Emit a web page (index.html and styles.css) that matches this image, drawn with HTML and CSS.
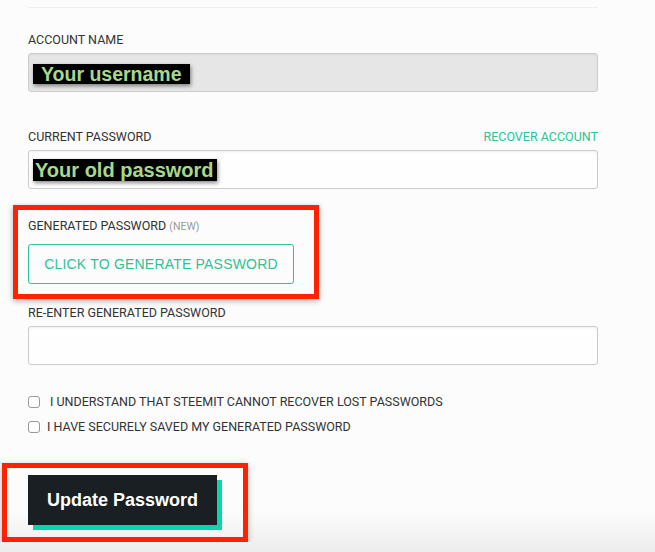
FILE: index.html
```html
<!DOCTYPE html>
<html lang="en">
  <head>
    <meta charset="UTF-8" />
    <meta name="viewport" content="width=device-width, initial-scale=1.0" />
    <title>Change Password</title>
    <link rel="stylesheet" href="styles.css">
  </head>

  <body>
    <div class="container">
      <div class="divider"></div>

      <form id="password-form">
        <label class="field-label first">ACCOUNT NAME</label>
        <div class="input disabled">
          <span class="marker small">Your username</span>
        </div>

        <div class="label-row">
          <label class="field-label">CURRENT PASSWORD</label>
          <a href="#" class="recover">RECOVER ACCOUNT</a>
        </div>
        <div class="input">
          <span class="marker">Your old password</span>
        </div>

        <div class="callout">
          <label class="field-label">GENERATED PASSWORD <span class="new">(NEW)</span></label>
          <button type="button" class="generate">CLICK TO GENERATE PASSWORD</button>
        </div>

        <label class="field-label">RE-ENTER GENERATED PASSWORD</label>
        <input type="password" class="input" name="confirm_password" />

        <div class="check-list">
          <label class="check"><input type="checkbox" /> <span class="wide">I UNDERSTAND THAT STEEMIT CANNOT RECOVER LOST PASSWORDS</span></label>
          <label class="check"><input type="checkbox" /> <span>I HAVE SECURELY SAVED MY GENERATED PASSWORD</span></label>
        </div>

        <div class="callout submit-callout">
          <button type="submit" class="update">Update Password</button>
        </div>
      </form>
    </div>
  </body>
</html>
```

FILE: styles.css
```css
html {
  min-height: 100%;
  background: linear-gradient(180deg, #fcfcfc 0, #fcfcfc 510px, #ededed 552px);
}

body {
  margin: 0;
  font-family: Roboto, "Open Sans", sans-serif;
  color: #333;
}

.container {
  width: 570px;
  padding: 7px 0 0 28px;
}

.divider {
  height: 1px;
  background-color: #eeeeee;
}

.field-label {
  display: block;
  font-size: 12.5px;
  line-height: 20px;
  color: #333;
  margin-top: 4px;
}

.field-label.first {
  margin-top: 22px;
}

.new {
  font-size: 10.5px;
  color: #999;
}

.label-row {
  display: flex;
  justify-content: space-between;
  align-items: center;
  margin-top: 35px;
}

.label-row .field-label {
  margin-top: 0;
}

.recover {
  font-size: 12.5px;
  line-height: 20px;
  color: #2ec296;
  text-decoration: none;
}

.input {
  display: flex;
  align-items: center;
  box-sizing: border-box;
  width: 570px;
  height: 39px;
  margin-top: 3px;
  padding: 0 4px;
  border: 1px solid #cccccc;
  border-radius: 3px;
  background-color: #fefefe;
  box-shadow: inset 0 1px 2px rgba(0, 0, 0, 0.06);
}

.input.disabled {
  background-color: #e6e6e6;
}

.marker {
  background-color: #000;
  color: #a8d88a;
  font-family: "Liberation Sans", Arial, sans-serif;
  font-weight: bold;
  font-size: 20px;
  line-height: 22px;
  padding: 0 3px 0 2px;
  box-shadow: 1px 2px 4px rgba(0, 0, 0, 0.45);
}

.marker.small {
  font-size: 19.5px;
  line-height: 20px;
  padding: 0 8px 0 8px;
  margin-top: 2px;
}

.callout {
  box-sizing: border-box;
  width: 306px;
  margin: 16px 0 0 -15px;
  padding: 6px 0 10px 10px;
  border: 5px solid #ff2200;
  box-shadow: 0 2px 6px rgba(0, 0, 0, 0.3);
}

.callout .field-label {
  margin-top: 0;
}

.generate {
  display: block;
  width: 266px;
  height: 40px;
  margin-top: 7px;
  border: 1px solid #2ec296;
  border-radius: 3px;
  background-color: #fcfcfc;
  color: #2ec296;
  font-family: "Liberation Sans", Arial, sans-serif;
  font-size: 14px;
  letter-spacing: 0.2px;
  cursor: pointer;
}

.check-list {
  display: flex;
  flex-direction: column;
  gap: 5px;
  margin-top: 27px;
}

.check {
  display: flex;
  align-items: center;
  gap: 7px;
  font-size: 12.5px;
  line-height: 20px;
  color: #333;
}

.check input {
  appearance: none;
  width: 12px;
  height: 12px;
  margin: 0;
  border: 1px solid #999;
  border-radius: 3px;
  background-color: #fff;
}

.check .wide {
  margin-left: 3px;
}

.submit-callout {
  width: 246px;
  margin: 26px 0 0 -26px;
  padding: 7px 0 12px 21px;
}

.update {
  display: block;
  width: 189px;
  height: 50px;
  border: none;
  background-color: #1a1f24;
  color: #fff;
  font-family: "Liberation Sans", Arial, sans-serif;
  font-weight: bold;
  font-size: 18px;
  box-shadow: 5px 5px 0 #06d6a9;
  cursor: pointer;
}
```
